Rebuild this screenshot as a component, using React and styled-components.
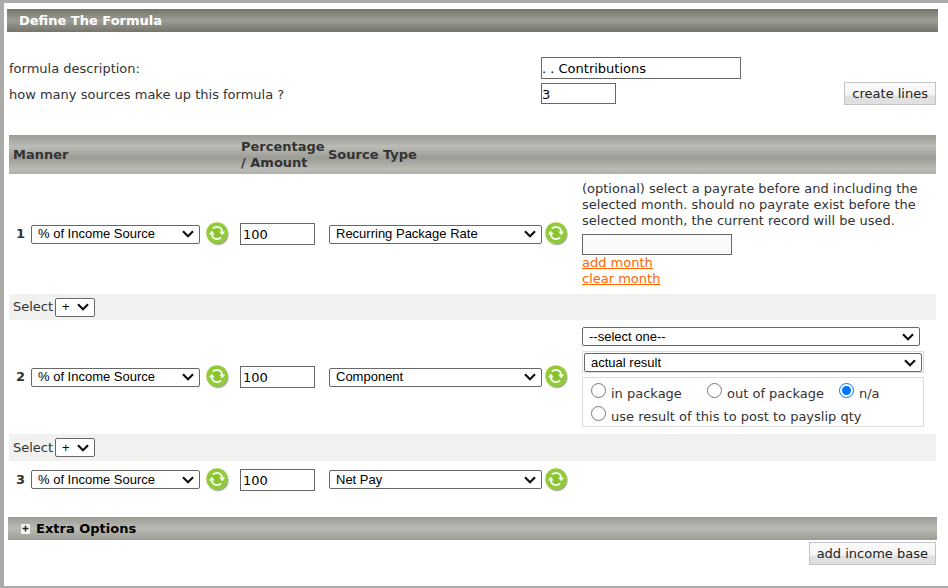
import React, { useState } from "react";
import styled, { createGlobalStyle } from "styled-components";

const GlobalStyle = createGlobalStyle`
  *, *::before, *::after { box-sizing: border-box; }
  html, body { margin: 0; min-height: 100%; }
  body {
    background: #fff;
    color: #333;
    font: 13px/16px Verdana, "DejaVu Sans", sans-serif;
  }
`;

const Page = styled.form`
  min-height: 100vh;
  border: solid #acabaa;
  border-width: 3px 0 2px 4px;
  padding: 6px 10px 20px 3px;
`;

const TitleBar = styled.h1`
  margin: 0;
  padding-left: 12px;
  font-size: 13px;
  line-height: 23px;
  color: #fff;
  background: linear-gradient(#74746b, #9c9d95 50%, #74746b);
`;

const Details = styled.div`
  display: grid;
  grid-template-columns: 532px 1fr auto;
  row-gap: 3px;
  align-items: center;
  padding: 25px 2px 0;
`;

const DetailLabel = styled.label`
  padding-top: 2px;
`;

const TextBox = styled.input`
  display: block;
  width: ${(p) => p.$width}px;
  height: ${(p) => p.$height || 22}px;
  padding: 1px ${(p) => p.$pad || 0}px 0;
  border: 1px solid #686868;
  background: ${(p) => (p.readOnly ? "#fafafa" : "#fff")};
  color: #000;
  font: inherit;
`;

const Button = styled.button`
  height: 23px;
  padding: 1px 7px 0;
  border: 1px solid #c3c3c3;
  background: linear-gradient(#fafafa, #f4f4f4 55%, #e0e0e0 65%, #e0e0e0);
  color: #222;
  font: inherit;
`;

const DescriptionCell = styled.div`
  grid-column: 2 / 4;
`;

const FormulaTable = styled.table`
  width: calc(100% - 4px);
  margin: 30px 2px 19px;
  border-collapse: collapse;
  table-layout: fixed;
`;

const HeadCell = styled.th`
  width: ${(p) => (p.$width ? `${p.$width}px` : "auto")};
  height: 39px;
  padding: 0 4px;
  text-align: left;
`;

const HeadRow = styled.tr`
  background: linear-gradient(#9b9c94, #babbb5 50%, #9b9c94) 0 0 / 100% 23px;
`;

const Cell = styled.td`
  height: ${(p) => p.$height}px;
  padding: 0 0 0 ${(p) => p.$pad}px;
`;

const JoinCell = styled.td`
  height: ${(p) => p.$height || 26}px;
  padding: 0 4px;
  background: #f1f1f0;
`;

const Inline = styled.div`
  display: flex;
  align-items: center;
  gap: ${(p) => p.$gap}px;
`;

const LineNumber = styled.strong`
  width: 9px;
`;

const Select = styled.select`
  display: block;
  appearance: none;
  width: ${(p) => (p.$width ? `${p.$width}px` : "100%")};
  height: 19px;
  padding: 0 20px 1px 6px;
  border: 1px solid #686868;
  border-radius: 2px;
  background: #fff
    url("data:image/svg+xml,%3Csvg xmlns='http://www.w3.org/2000/svg' width='12' height='8' viewBox='0 0 12 8'%3E%3Cpath d='M1 1.2L6 6.2L11 1.2' fill='none' stroke='%23111' stroke-width='2.2'/%3E%3C/svg%3E")
    no-repeat right 5px center;
  color: #000;
  font: 13px "Liberation Sans", Arial, sans-serif;
`;

const IconButton = styled.button`
  display: block;
  flex: none;
  width: 24px;
  height: 24px;
  padding: 0;
  border: 0;
  background: none;
  & > svg { display: block; }
`;

const Note = styled.p`
  margin: 0 8px 5px 0;
`;

const MonthLink = styled.a`
  display: block;
  width: max-content;
  color: #f60;
`;

const ResultPanel = styled.div`
  margin-right: 12px;
`;

const Bordered = styled.div`
  margin-top: 5px;
  padding: 1px 1px 0;
  border: 1px solid #ddd;
`;

const SelectHolder = styled.div`
  padding-right: 4px;
`;

const Choices = styled.fieldset`
  display: flex;
  flex-wrap: wrap;
  margin: 4px 0 0;
  padding: 5px 8px 0;
  border: 1px solid #ddd;
`;

const Choice = styled.label`
  display: flex;
  align-items: flex-end;
  gap: 5px;
  width: ${(p) => p.$width};
  height: 19px;
  margin-bottom: ${(p) => p.$bottom}px;
  white-space: nowrap;
`;

const Radio = styled.input`
  align-self: flex-start;
  width: 15px;
  height: 15px;
  margin: 0;
`;

const ExtraBar = styled.button`
  display: flex;
  align-items: center;
  gap: 6px;
  width: calc(100% - 2px);
  height: 23px;
  margin: 0 1px 2px;
  padding: 0 0 0 13px;
  border: 0;
  background: linear-gradient(#9b9c94, #babbb5 50%, #9b9c94);
  color: #000;
  font: bold 13px/23px Verdana, "DejaVu Sans", sans-serif;
`;

const Actions = styled.div`
  display: flex;
  justify-content: flex-end;
  padding-right: 2px;
`;

function RefreshIcon() {
  return (
    <svg width="24" height="24" viewBox="0 0 24 24" aria-hidden="true">
      <defs>
        <radialGradient id="refreshGreen" cx="50%" cy="50%" r="55%">
          <stop offset="0" stopColor="#86c02c" />
          <stop offset="0.7" stopColor="#8fc938" />
          <stop offset="1" stopColor="#a0d23c" />
        </radialGradient>
        <radialGradient id="refreshShadow">
          <stop offset="0.8" stopColor="#555" stopOpacity="0.7" />
          <stop offset="1" stopColor="#777" stopOpacity="0" />
        </radialGradient>
      </defs>
      <circle cx="12" cy="12.5" r="11.5" fill="url(#refreshShadow)" />
      <circle cx="11" cy="11" r="10.8" fill="url(#refreshGreen)" />
      <g fill="none" stroke="#f4faea" strokeWidth="1.9">
        <path d="M6.8 6.6C9.6 3.7 16 4.6 16.2 10" />
        <path d="M15.2 15.4C12.4 18.3 6 17.4 5.8 12" />
      </g>
      <path d="M13.2 9.6H19.2L16.2 13.4Z" fill="#f4faea" />
      <path d="M2.8 12.4H8.8L5.8 8.6Z" fill="#f4faea" />
    </svg>
  );
}

function Refresh({ label }) {
  return (
    <IconButton type="button" aria-label={label}>
      <RefreshIcon />
    </IconButton>
  );
}

function Line({ number, source, height, children }) {
  return (
    <tr>
      <Cell $height={height} $pad={7}>
        <Inline $gap={6}>
          <LineNumber>{number}</LineNumber>
          <Select $width={169} aria-label={`Manner ${number}`}>
            <option>% of Income Source</option>
          </Select>
          <Refresh label={`Refresh manner ${number}`} />
        </Inline>
      </Cell>
      <Cell $pad={3}>
        <TextBox $width={75} $pad={2} defaultValue="100" aria-label={`Percentage / Amount ${number}`} />
      </Cell>
      <Cell $pad={5}>
        <Inline $gap={3}>
          <Select $width={213} aria-label={`Source type ${number}`}>
            <option>{source}</option>
          </Select>
          <Refresh label={`Refresh source type ${number}`} />
        </Inline>
      </Cell>
      <Cell $pad={4}>{children}</Cell>
    </tr>
  );
}

function Join({ id, height }) {
  return (
    <tr>
      <JoinCell colSpan={4} $height={height}>
        <Inline $gap={2}>
          <label htmlFor={id}>Select</label>
          <Select id={id} $width={40}>
            <option>+</option>
            <option>-</option>
          </Select>
        </Inline>
      </JoinCell>
    </tr>
  );
}

const CHOICES = [
  { value: "in package", width: "116px", bottom: 4 },
  { value: "out of package", width: "132px", bottom: 4 },
  { value: "n/a", width: "auto", bottom: 4 },
  { value: "use result of this to post to payslip qty", width: "100%", bottom: 1 },
];

export default function App() {
  const [choice, setChoice] = useState("n/a");
  return (
    <>
      <GlobalStyle />
      <Page onSubmit={(e) => e.preventDefault()}>
        <TitleBar>Define The Formula</TitleBar>
        <Details>
          <DetailLabel htmlFor="description">formula description:</DetailLabel>
          <DescriptionCell>
            <TextBox id="description" $width={200} defaultValue=". . Contributions" />
          </DescriptionCell>
          <DetailLabel htmlFor="sources">how many sources make up this formula ?</DetailLabel>
          <TextBox id="sources" $width={75} $height={21} defaultValue="3" />
          <Button type="button">create lines</Button>
        </Details>

        <FormulaTable>
          <thead>
            <HeadRow>
              <HeadCell $width={228}>Manner</HeadCell>
              <HeadCell $width={87}>Percentage / Amount</HeadCell>
              <HeadCell $width={254}>Source Type</HeadCell>
              <HeadCell />
            </HeadRow>
          </thead>
          <tbody>
            <Line number={1} source="Recurring Package Rate" height={120}>
              <Note>
                (optional) select a payrate before and including the selected month. should no
                payrate exist before the selected month, the current record will be used.
              </Note>
              <TextBox $width={150} $height={21} readOnly aria-label="Selected month" />
              <MonthLink href="#add">add month</MonthLink>
              <MonthLink href="#clear">clear month</MonthLink>
            </Line>
            <Join id="join1" />
            <Line number={2} source="Component" height={114}>
              <ResultPanel>
                <SelectHolder>
                  <Select aria-label="Component">
                    <option>--select one--</option>
                  </Select>
                </SelectHolder>
                <Bordered>
                  <Select aria-label="Result type">
                    <option>actual result</option>
                  </Select>
                </Bordered>
                <Choices aria-label="Package">
                  {CHOICES.map((c) => (
                    <Choice key={c.value} $width={c.width} $bottom={c.bottom}>
                      <Radio
                        type="radio"
                        name="package"
                        checked={choice === c.value}
                        onChange={() => setChoice(c.value)}
                      />
                      {c.value}
                    </Choice>
                  ))}
                </Choices>
              </ResultPanel>
            </Line>
            <Join id="join2" height={27} />
            <Line number={3} source="Net Pay" height={37} />
          </tbody>
        </FormulaTable>

        <ExtraBar type="button">
          <svg width="9" height="10" viewBox="0 0 9 10" aria-hidden="true">
            <rect width="9" height="10" rx="1" fill="#f4f4ee" />
            <path d="M1.5 4.5H7.5M4.5 1.5V7.5" stroke="#222" strokeWidth="1.4" />
          </svg>
          Extra Options
        </ExtraBar>
        <Actions>
          <Button type="button">add income base</Button>
        </Actions>
      </Page>
    </>
  );
}
